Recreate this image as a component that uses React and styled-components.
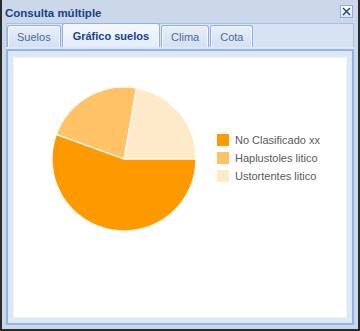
import React from 'react';
import styled, { createGlobalStyle } from 'styled-components';

const GlobalStyle = createGlobalStyle`
  html, body {
    margin: 0;
    padding: 0;
    background: #ffffff;
  }
  * {
    box-sizing: border-box;
  }
`;

const Window = styled.div`
  width: 360px;
  height: 331px;
  display: flex;
  flex-direction: column;
  background: #cbd8e9;
  border: 2px solid #2a2a2a;
  border-top: none;
  font-family: "Liberation Sans", Arial, sans-serif;
`;

const TitleBar = styled.div`
  height: 23px;
  flex: none;
  display: flex;
  align-items: center;
  justify-content: space-between;
  padding: 0 5px 0 3px;
`;

const Title = styled.span`
  font-size: 11.5px;
  font-weight: bold;
  color: #15428b;
  padding-top: 2px;
`;

const CloseButton = styled.div`
  width: 13px;
  height: 13px;
  border: 1px solid #8eaedb;
  background: linear-gradient(#ffffff, #dbe6f4);
  display: flex;
  align-items: center;
  justify-content: center;
`;

const Content = styled.div`
  flex: 1;
  display: flex;
  flex-direction: column;
  padding: 0 4px 4px 4px;
`;

const TabHeader = styled.div`
  height: 24px;
  flex: none;
  display: flex;
  align-items: flex-end;
  gap: 1px;
  padding-left: 0;
  background: #d7e3f3;
  border: 1px solid #a7c0e3;
  border-bottom: none;
`;

const Tab = styled.div`
  height: ${p => (p.$active ? 24 : 22)}px;
  padding: 0 ${p => (p.$active ? 10 : 9)}px;
  display: flex;
  align-items: center;
  font-size: 11px;
  font-weight: ${p => (p.$active ? 'bold' : 'normal')};
  color: ${p => (p.$active ? '#15428b' : '#466b9e')};
  border: 1px solid #8db2e3;
  border-bottom: none;
  border-radius: 3px 3px 0 0;
  box-shadow: inset 1px 1px 0 #f4f8fd, inset -1px 0 0 #f4f8fd;
  background: ${p =>
    p.$active
      ? 'linear-gradient(#f6f9fe, #e3ecf9)'
      : 'linear-gradient(#e8eff9, #d3e1f3)'};
`;

const Spacer = styled.div`
  height: 2px;
  flex: none;
  background: #dfe8f6;
`;

const TabBody = styled.div`
  flex: 1;
  display: flex;
  border: 2px solid #92b6e4;
  background: #dfe8f6;
  padding: 6px 5px 5px 5px;
`;

const ChartPanel = styled.div`
  flex: 1;
  background: #ffffff;
  border: 1px solid #eef3fa;
  padding: 28px 0 0 37px;
`;

const ChartRow = styled.div`
  display: flex;
  align-items: center;
  gap: 20px;
`;

const Legend = styled.div`
  display: flex;
  flex-direction: column;
  gap: 6px;
  margin-bottom: 3px;
`;

const LegendItem = styled.div`
  display: flex;
  align-items: center;
  gap: 6px;
  height: 12px;
  font-size: 11px;
  color: #5a5a5a;
`;

const Swatch = styled.span`
  width: 12px;
  height: 12px;
  flex: none;
  background: ${p => p.$color};
`;

const data = [
  { label: 'No Clasificado xx', value: 5, color: '#ff9900' },
  { label: 'Haplustoles litico', value: 2, color: '#ffc266' },
  { label: 'Ustortentes litico', value: 2, color: '#fee9c9' },
];

const tabs = ['Suelos', 'Gráfico suelos', 'Clima', 'Cota'];

function Pie({ size = 146, r = 72 }) {
  const c = size / 2;
  const total = data.reduce((s, d) => s + d.value, 0);
  let start = 0;
  const pt = a => [c + r * Math.cos(a), c + r * Math.sin(a)];
  return (
    <svg width={size} height={size} viewBox={`0 0 ${size} ${size}`}>
      {data.map(d => {
        const end = start + (d.value / total) * Math.PI * 2;
        const [x1, y1] = pt(start);
        const [x2, y2] = pt(end);
        const large = end - start > Math.PI ? 1 : 0;
        const path = `M${c},${c} L${x1},${y1} A${r},${r} 0 ${large} 1 ${x2},${y2} Z`;
        start = end;
        return <path key={d.label} d={path} fill={d.color} stroke="#ffffff" strokeWidth="1.2" />;
      })}
    </svg>
  );
}

export default function App() {
  return (
    <>
      <GlobalStyle />
      <Window>
        <TitleBar>
          <Title>Consulta múltiple</Title>
          <CloseButton>
            <svg width="9" height="9" viewBox="0 0 9 9">
              <path d="M1 1 L8 8 M8 1 L1 8" stroke="#15428b" strokeWidth="1.4" />
            </svg>
          </CloseButton>
        </TitleBar>
        <Content>
          <TabHeader>
            {tabs.map(t => (
              <Tab key={t} $active={t === 'Gráfico suelos'}>{t}</Tab>
            ))}
          </TabHeader>
          <Spacer />
          <TabBody>
            <ChartPanel>
              <ChartRow>
                <Pie />
                <Legend>
                  {data.map(d => (
                    <LegendItem key={d.label}>
                      <Swatch $color={d.color} />
                      {d.label}
                    </LegendItem>
                  ))}
                </Legend>
              </ChartRow>
            </ChartPanel>
          </TabBody>
        </Content>
      </Window>
    </>
  );
}
